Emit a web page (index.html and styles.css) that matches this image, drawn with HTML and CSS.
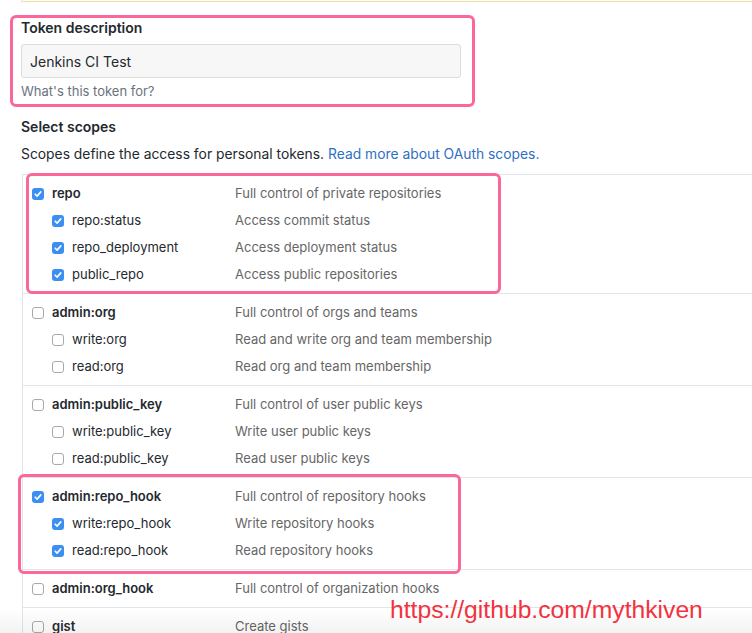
FILE: index.html
```html
<!DOCTYPE html>
<html>
<head>
<meta charset="utf-8">
<link rel="stylesheet" href="styles.css">
</head>
<body>
<div class="flash"></div>
<div class="page">
  <div class="form-group">
    <label class="form-label">Token description</label>
    <input class="form-input" type="text" value="Jenkins CI Test">
    <p class="note">What's this token for?</p>
  </div>
  <h3 class="section-title">Select scopes</h3>
  <p class="section-desc">Scopes define the access for personal tokens. <a class="link" href="#">Read more about OAuth scopes.</a></p>

  <div class="scopes">
    <div class="group">
      <div class="row parent"><span class="cb on"></span><span class="name">repo</span><span class="desc">Full control of private repositories</span></div>
      <div class="row child"><span class="cb on"></span><span class="name">repo:status</span><span class="desc">Access commit status</span></div>
      <div class="row child"><span class="cb on"></span><span class="name">repo_deployment</span><span class="desc">Access deployment status</span></div>
      <div class="row child"><span class="cb on"></span><span class="name">public_repo</span><span class="desc">Access public repositories</span></div>
    </div>
    <div class="group">
      <div class="row parent"><span class="cb"></span><span class="name">admin:org</span><span class="desc">Full control of orgs and teams</span></div>
      <div class="row child"><span class="cb"></span><span class="name">write:org</span><span class="desc">Read and write org and team membership</span></div>
      <div class="row child"><span class="cb"></span><span class="name">read:org</span><span class="desc">Read org and team membership</span></div>
    </div>
    <div class="group">
      <div class="row parent"><span class="cb"></span><span class="name">admin:public_key</span><span class="desc">Full control of user public keys</span></div>
      <div class="row child"><span class="cb"></span><span class="name">write:public_key</span><span class="desc">Write user public keys</span></div>
      <div class="row child"><span class="cb"></span><span class="name">read:public_key</span><span class="desc">Read user public keys</span></div>
    </div>
    <div class="group">
      <div class="row parent"><span class="cb on"></span><span class="name">admin:repo_hook</span><span class="desc">Full control of repository hooks</span></div>
      <div class="row child"><span class="cb on"></span><span class="name">write:repo_hook</span><span class="desc">Write repository hooks</span></div>
      <div class="row child"><span class="cb on"></span><span class="name">read:repo_hook</span><span class="desc">Read repository hooks</span></div>
    </div>
    <div class="group">
      <div class="row parent"><span class="cb"></span><span class="name">admin:org_hook</span><span class="desc">Full control of organization hooks</span></div>
    </div>
    <div class="group">
      <div class="row parent"><span class="cb"></span><span class="name">gist</span><span class="desc">Create gists</span></div>
    </div>
  </div>
</div>

<div class="mark mark-token"></div>
<div class="mark mark-repo"></div>
<div class="mark mark-hook"></div>
<div class="bottom-shade"></div>
<div class="watermark">https://github.com/mythkiven</div>
</body>
</html>
```
FILE: styles.css
```css
html, body {
  margin: 0;
  padding: 0;
  background: #fff;
  overflow: hidden;
}
body {
  position: relative;
  width: 752px;
  height: 633px;
  font-family: Inter, "Liberation Sans", Arial, sans-serif;
  color: #24292e;
}
.flash {
  margin-left: 21px;
  height: 1px;
  background: #fffbea;
  border-left: 1px solid #eadfb9;
  border-bottom: 1px solid #eadfb9;
  border-bottom-left-radius: 3px;
}
.page {
  padding-left: 21px;
}
.form-group {
  padding-top: 16px;
}
.form-label {
  display: block;
  font-size: 14px;
  font-weight: 600;
  line-height: 20px;
}
.form-input {
  display: block;
  box-sizing: border-box;
  margin-top: 6px;
  width: 440px;
  height: 34px;
  padding: 0 8px;
  font-family: Inter, "Liberation Sans", Arial, sans-serif;
  font-size: 14px;
  color: #24292e;
  background: #f7f7f7;
  border: 1px solid #dcdcdc;
  border-radius: 3px;
  outline: none;
}
.note {
  margin: 4px 0 0;
  font-size: 13px;
  line-height: 18px;
  color: #6a737d;
}
.section-title {
  margin: 17px 0 0;
  font-size: 14px;
  font-weight: 600;
  line-height: 20px;
}
.section-desc {
  margin: 7px 0 0;
  font-size: 13.85px;
  line-height: 20px;
}
.link {
  color: #2f6fc4;
  text-decoration: none;
}
.scopes {
  margin-top: 10px;
  margin-left: 1px;
  border-top: 1px solid #e1e4e8;
  border-left: 1px solid #e1e4e8;
}
.group {
  padding: 5px 0;
  border-bottom: 1px solid #e1e4e8;
}
.row {
  display: flex;
  align-items: center;
  height: 27px;
  font-size: 13px;
}
.row.parent {
  padding-left: 9px;
}
.row.child {
  padding-left: 29px;
}
.row.parent .name {
  font-weight: 600;
}
.name, .desc {
  margin-bottom: 2px;
}
.name {
  margin-left: 8px;
  color: #24292e;
}
.row.parent .name { width: 183px; }
.row.child .name { width: 163px; }
.desc {
  color: #666;
}
.cb {
  box-sizing: border-box;
  width: 12px;
  height: 12px;
  border: 1px solid #a9a9a9;
  border-radius: 3px;
  background: #fff;
  flex: none;
}
.cb.on {
  border: none;
  background: #3b8ff3 url("data:image/svg+xml,%3Csvg xmlns='http://www.w3.org/2000/svg' viewBox='0 0 12 12'%3E%3Cpath d='M3.2 6.2 L5.1 8.1 L8.8 3.9' fill='none' stroke='white' stroke-width='1.6' stroke-linecap='round' stroke-linejoin='round'/%3E%3C/svg%3E") center/12px 12px no-repeat;
}
.mark {
  position: absolute;
  box-sizing: border-box;
  border: 3px solid #fb6799;
  border-radius: 6px;
}
.mark-token {
  left: 10px;
  top: 15px;
  width: 465px;
  height: 92px;
}
.mark-repo {
  left: 26px;
  top: 173px;
  width: 475px;
  height: 121px;
}
.mark-hook {
  left: 18px;
  top: 474px;
  width: 443px;
  height: 100px;
}
.bottom-shade {
  position: absolute;
  left: 0;
  right: 0;
  bottom: 0;
  height: 24px;
  background: linear-gradient(to bottom, rgba(0,0,0,0), rgba(0,0,0,0.05));
  pointer-events: none;
}
.watermark {
  position: absolute;
  left: 390px;
  top: 595px;
  font-family: "Liberation Sans", Arial, sans-serif;
  font-size: 24.7px;
  line-height: 30px;
  color: #f2333f;
}
```
